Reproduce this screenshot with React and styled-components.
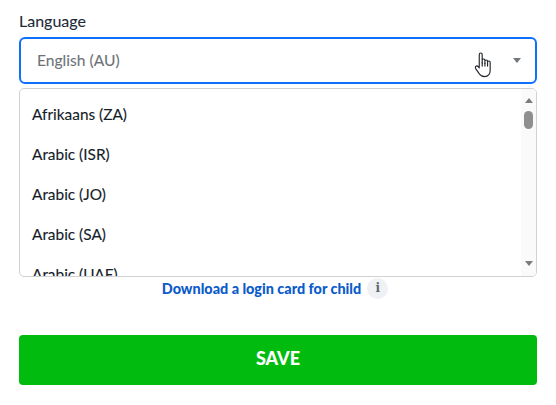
import React from 'react'
import styled, { createGlobalStyle } from 'styled-components'

const Global = createGlobalStyle`
  html, body { margin: 0; padding: 0; background: #fff; overflow: hidden; }
  * { box-sizing: border-box; }
  body { font-family: Lato, "Open Sans", sans-serif; }
`

const Page = styled.div`
  width: 556px;
  height: 405px;
  padding: 11px 19px 0;
  display: flex;
  flex-direction: column;
`

const Label = styled.div`
  font-size: 16px;
  line-height: 20px;
  height: 26px;
  color: #1c2b39;
  -webkit-text-stroke: 0.1px #1c2b39;
`

const Field = styled.div`
  position: relative;
  height: 240px;
`

const SelectBox = styled.div`
  height: 47px;
  border: 2px solid #0f6fff;
  border-radius: 6px;
  padding: 0 14px 2px 16px;
  display: flex;
  align-items: center;
  justify-content: space-between;
  color: #6d7278;
  font-size: 15.6px;
  -webkit-text-stroke: 0.1px #6d7278;
`

const Caret = styled.span`
  width: 0;
  height: 0;
  margin-top: 2px;
  border-left: 4.5px solid transparent;
  border-right: 4.5px solid transparent;
  border-top: 5px solid #72777c;
`

const Cursor = styled.svg`
  position: absolute;
  left: 455px;
  top: 14px;
`

const Dropdown = styled.div`
  position: absolute;
  left: 0;
  right: 0;
  top: 51px;
  height: 189px;
  background: #fff;
  border: 1px solid #cfd1d2;
  border-radius: 5px;
  overflow: hidden;
  display: flex;
  z-index: 2;
`

const List = styled.ul`
  list-style: none;
  margin: 0;
  padding: 5px 0 0;
  flex: 1;
`

const Option = styled.li`
  height: 40px;
  line-height: 40px;
  padding-left: 12px;
  font-size: 15.4px;
  color: #141d29;
  -webkit-text-stroke: 0.12px #141d29;
`

const Track = styled.div`
  width: 15px;
  background: #fafafa;
  display: flex;
  flex-direction: column;
  align-items: center;
  padding: 9px 0 10px;
`

const Arrow = styled.span`
  width: 0;
  height: 0;
  border-left: 4.5px solid transparent;
  border-right: 4.5px solid transparent;
  ${p => (p.$down ? 'border-top: 5px solid #7b7b7b; margin-top: auto;' : 'border-bottom: 5px solid #7b7b7b;')}
`

const Thumb = styled.div`
  width: 9px;
  height: 18px;
  margin-top: 8px;
  border-radius: 5px;
  background: #8f8f8f;
`

const DownloadRow = styled.div`
  height: 24px;
  margin-top: -1px;
  padding-right: 6px;
  display: flex;
  justify-content: center;
  align-items: center;
  gap: 6px;
`

const DownloadLink = styled.a`
  color: #0b5bc9;
  font-size: 14.4px;
  font-weight: 900;
`

const InfoBadge = styled.span`
  width: 21px;
  height: 21px;
  border-radius: 50%;
  background: #eff1f4;
  color: #5f6670;
  display: flex;
  align-items: center;
  justify-content: center;
  font-family: "DejaVu Serif", serif;
  font-size: 12px;
  font-weight: 700;
`

const SaveButton = styled.button`
  display: block;
  width: 100%;
  height: 50px;
  margin-top: 35px;
  padding: 0 0 5px;
  border: 0;
  border-radius: 4px;
  background: #01bb0f;
  color: #fff;
  font-family: Lato, sans-serif;
  font-size: 18px;
  font-weight: 900;
`

const languages = ['Afrikaans (ZA)', 'Arabic (ISR)', 'Arabic (JO)', 'Arabic (SA)', 'Arabic (UAE)']

export default function App() {
  return (
    <Page>
      <Global />
      <Label>Language</Label>
      <Field>
        <SelectBox>
          English (AU)
          <Caret />
        </SelectBox>
        <Cursor width="21" height="28" viewBox="0 0 20 26" fill="#fff" stroke="#23262b" strokeWidth="1.1" strokeLinejoin="round" strokeLinecap="round">
          <path d="M5 15V3.2c0-2.2 2.8-2.2 2.8 0V11V8.6c0-1.7 2.6-1.7 2.6 0v3-2.2c0-1.6 2.5-1.6 2.5 0v2.6-1.7c0-1.5 2.5-1.5 2.5 0V18c0 3.6-2 6-5.4 6-2.6 0-4-1-5.4-3.2L1.6 16.4c-1.1-1.9 1-3.2 2.2-2L5 15.8" />
          <path d="M7.8 11v3M10.4 11.5v2.5M12.9 12v2" fill="none" />
        </Cursor>
        <Dropdown>
          <List>
            {languages.map(l => <Option key={l}>{l}</Option>)}
          </List>
          <Track>
            <Arrow />
            <Thumb />
            <Arrow $down />
          </Track>
        </Dropdown>
      </Field>
      <DownloadRow>
        <DownloadLink>Download a login card for child</DownloadLink>
        <InfoBadge>i</InfoBadge>
      </DownloadRow>
      <SaveButton>SAVE</SaveButton>
    </Page>
  )
}
